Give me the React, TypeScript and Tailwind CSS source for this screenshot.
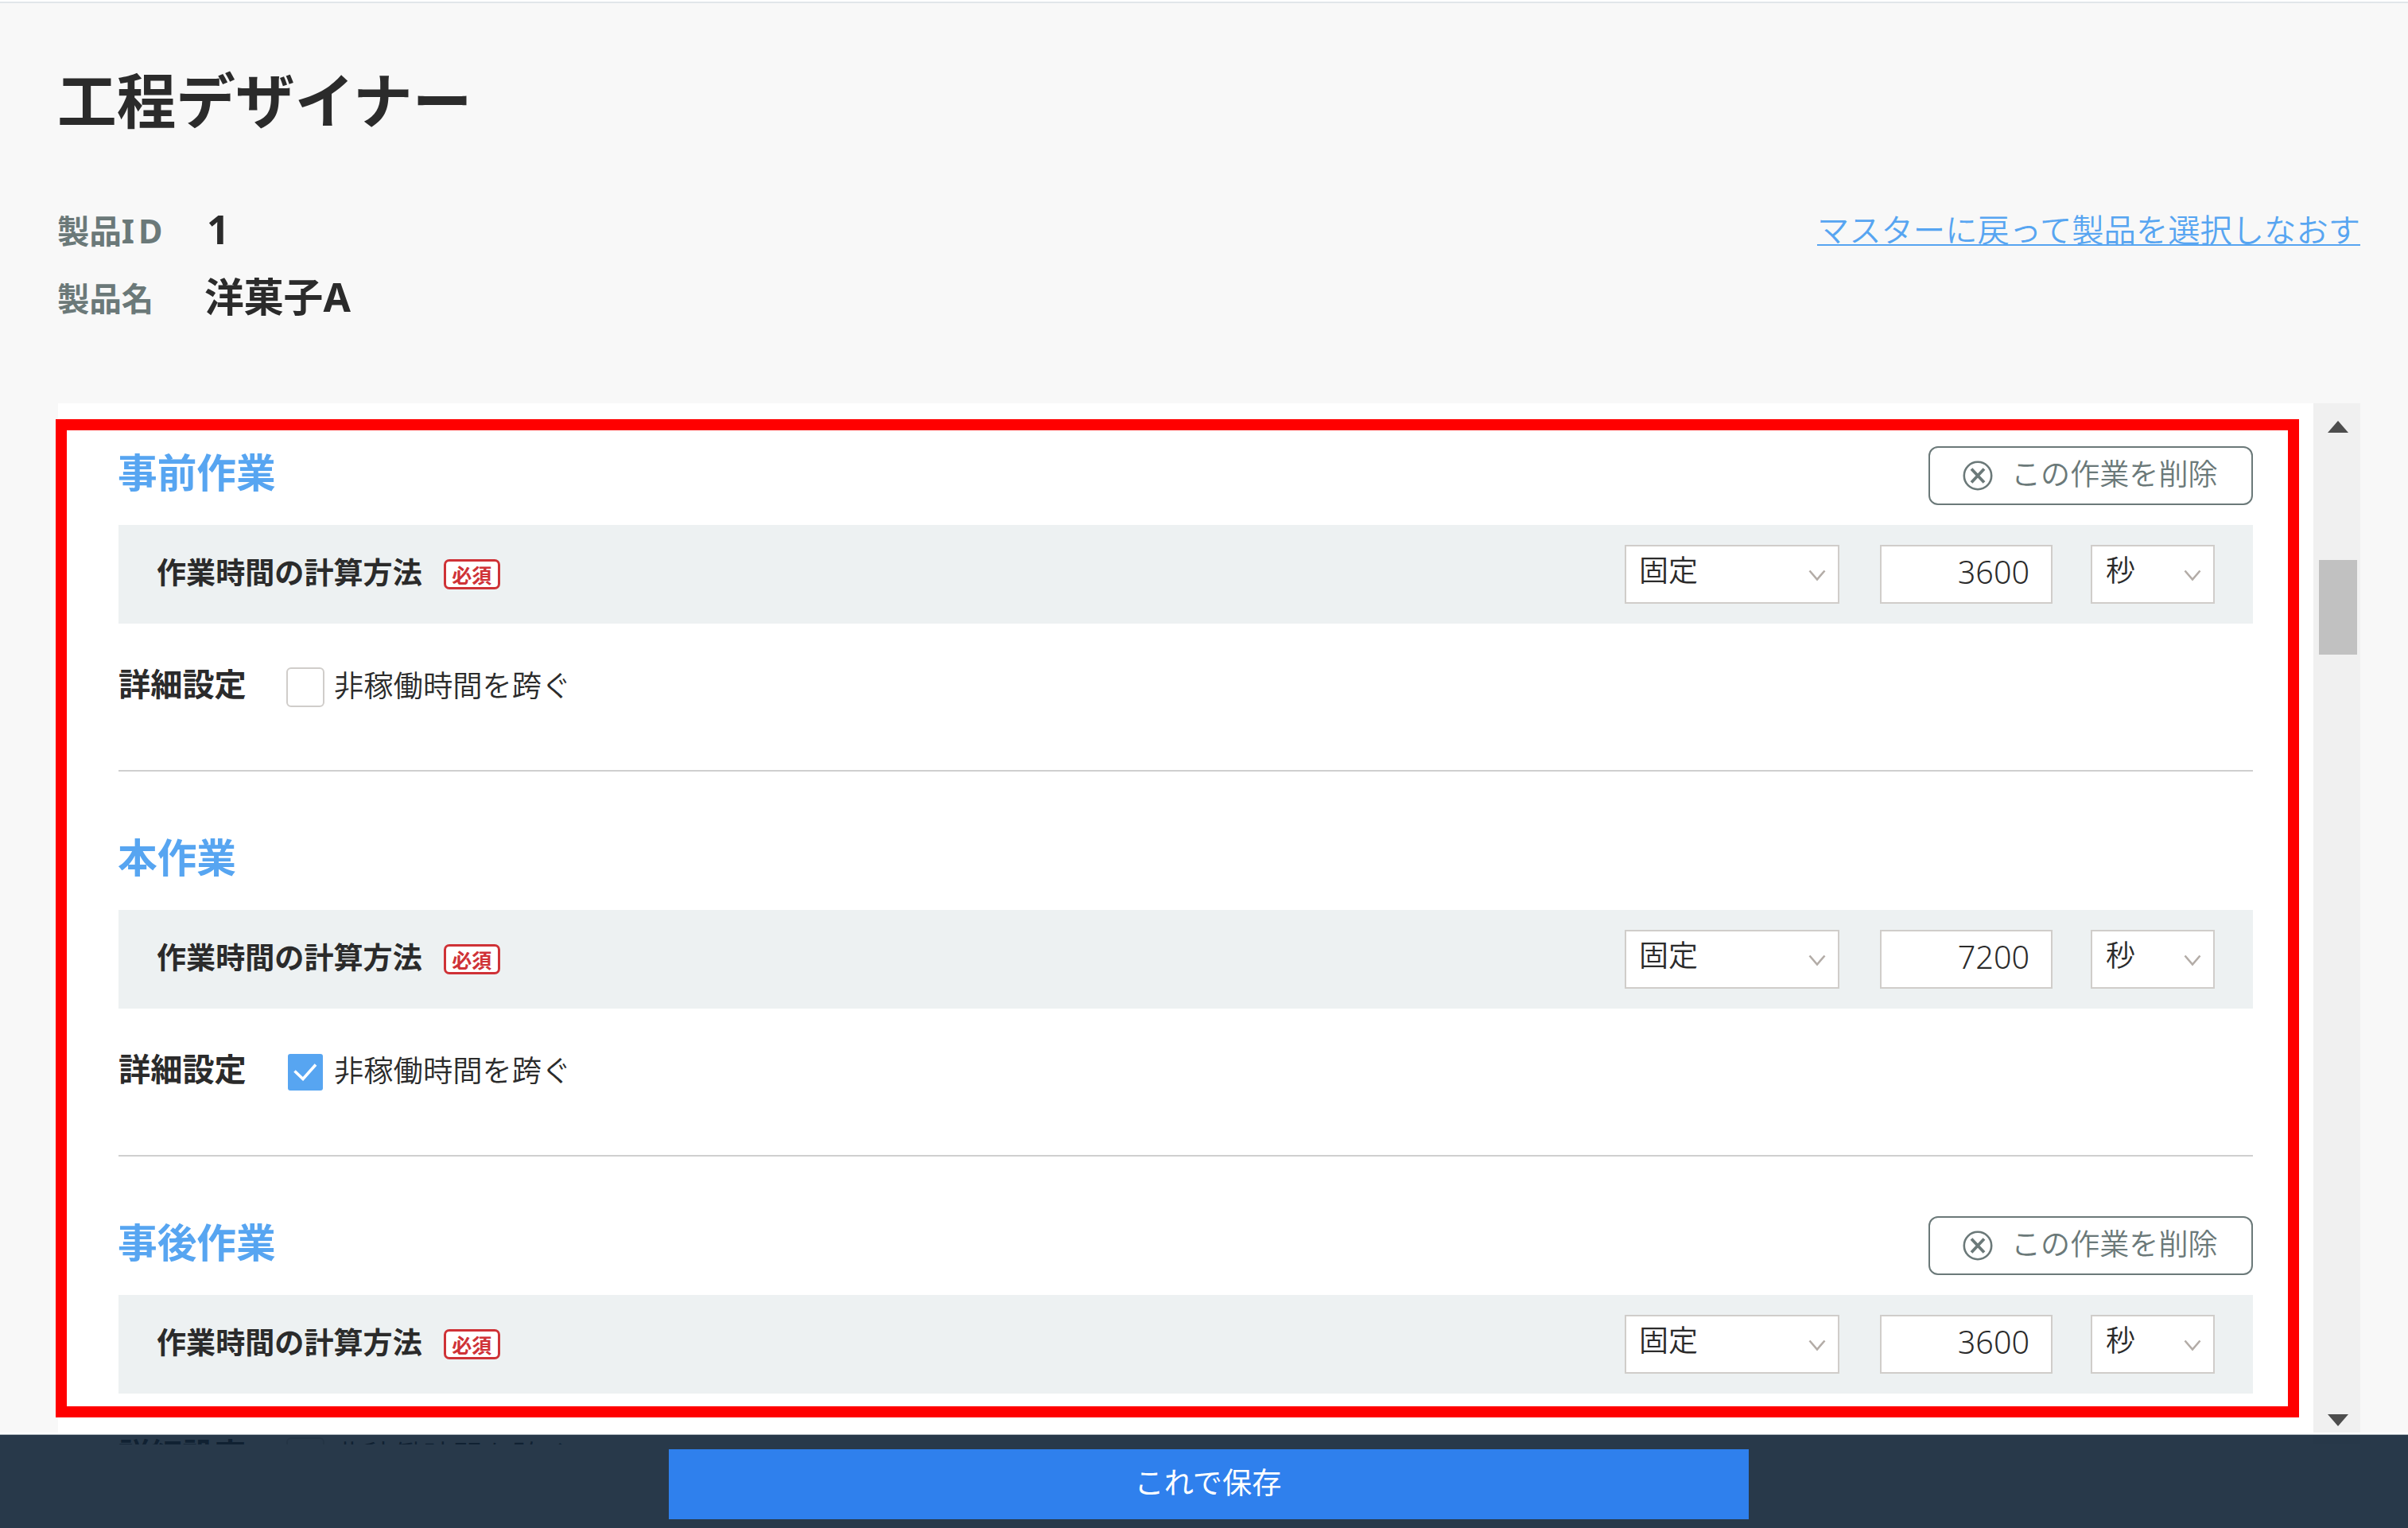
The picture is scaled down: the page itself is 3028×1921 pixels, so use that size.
import clsx from 'clsx';

type Work = {
  title: string;
  seconds: number;
  removable: boolean;
  crossIdle: boolean;
};

const works: Work[] = [
  { title: '事前作業', seconds: 3600, removable: true, crossIdle: false },
  { title: '本作業', seconds: 7200, removable: false, crossIdle: true },
  { title: '事後作業', seconds: 3600, removable: true, crossIdle: false },
];

function DeleteButton() {
  return (
    <button className="flex h-[74px] w-[408px] items-center rounded-[12px] border-2 border-[#6b7979] bg-white pl-[41px] text-[#6b7979]">
      <svg className="size-[38px]" viewBox="0 0 38 38" fill="none" stroke="currentColor">
        <circle cx="19" cy="19" r="17.2" strokeWidth="2.6" />
        <path d="M11 10.5l16 17M27 10.5l-16 17" strokeWidth="3.8" />
      </svg>
      <span className="ml-[23px] pb-[4px] text-[37.1px] leading-[60px] font-[350]">この作業を削除</span>
    </button>
  );
}

function SelectBox({ value, className }: { value: string; className: string }) {
  return (
    <div className={clsx('flex h-[74px] items-center justify-between border-2 border-[#d0cdca] bg-white pr-[15px]', className)}>
      <span className="pb-[10px] text-[37px] leading-[56px] font-[350]">{value}</span>
      <svg className="mt-[3px] h-[15px] w-[22px]" viewBox="0 0 22 15" fill="none" stroke="#b3aca7" strokeWidth="2.6">
        <path d="M1.5 1.5L11 12.5L20.5 1.5" />
      </svg>
    </div>
  );
}

function Checkbox({ checked }: { checked: boolean }) {
  if (!checked) {
    return <span className="h-[50px] w-[48px] rounded-[6px] border-2 border-[#d0cdca] bg-white" />;
  }
  return (
    <span className="mx-[2px] flex h-[46px] w-[44px] items-center justify-center rounded-[3px] bg-[#57a5f1]">
      <svg className="h-[22px] w-[30px]" viewBox="0 0 30 22" fill="none" stroke="#fff" strokeWidth="3.6">
        <path d="M1.5 9.5L12 19.5L28 1.5" />
      </svg>
    </span>
  );
}

function WorkSection({ work }: { work: Work }) {
  return (
    <section className="h-[484px]">
      <div className="flex h-[99px] items-start justify-between">
        <h2 className="-ml-px text-[49.7px] leading-[66px] font-bold text-[#57a5f1]">{work.title}</h2>
        {work.removable && <DeleteButton />}
      </div>

      <div className="flex h-[124px] items-center bg-[#edf1f2] pr-[48px] pl-[48px]">
        <span className="pb-[5px] text-[37.1px] leading-[60px] font-bold">作業時間の計算方法</span>
        <span className="ml-[27px] flex h-[38px] w-[71px] items-center justify-center rounded-[7px] border-[3px] border-[#cf3237] bg-white pt-[2px] text-[25px] leading-[30px] font-bold text-[#cf3237]">
          必須
        </span>
        <SelectBox value="固定" className="ml-auto w-[270px] pl-[16px]" />
        <div className="mr-[48px] ml-[51px] flex h-[74px] w-[217px] items-center justify-end border-2 border-[#d0cdca] bg-white pr-[27px] pb-[5px] text-[39.5px] font-[350]">
          {work.seconds}
        </div>
        <SelectBox value="秒" className="w-[156px] pl-[17px]" />
      </div>

      <div className="flex h-[186px] items-start border-b-[2px] border-[#cfcfcf] pt-[50px]">
        <span className="w-[211px] text-[40.2px] leading-[52px] font-bold">詳細設定</span>
        <label className="flex h-[60px] items-center">
          <Checkbox checked={work.crossIdle} />
          <span className="ml-[12px] pb-[5px] text-[37.3px] leading-[54px] font-[350]">非稼働時間を跨ぐ</span>
        </label>
      </div>
    </section>
  );
}

function Scrollbar() {
  return (
    <div className="flex h-[1309px] w-[59px] flex-col items-center bg-[#f0f0f0] pt-[22px]">
      <svg className="ml-[2px] h-[15px] w-[26px]" viewBox="0 0 26 15" fill="#4d4d4d">
        <path d="M13 0L26 15H0z" />
      </svg>
      <div className="mt-[160px] ml-[3px] h-[119px] w-[48px] bg-[#c1c1c1]" />
      <svg className="mt-[955px] ml-[2px] h-[15px] w-[26px] shrink-0" viewBox="0 0 26 15" fill="#4d4d4d">
        <path d="M0 0H26L13 15z" />
      </svg>
    </div>
  );
}

export default function App() {
  return (
    <div className="relative h-[1921px] w-[3028px] overflow-hidden border-t-2 border-white bg-[#f8f8f8] font-['Noto_Sans','Noto_Sans_CJK_JP',sans-serif] text-[#2b2b2b]">
      <header className="h-[505px] border-t-[2px] border-[#e1e6ea] pr-[60px] pl-[72px]">
        <h1 className="pt-[72px] text-[74.7px] leading-[100px] font-bold">工程デザイナー</h1>
        <div className="flex items-start justify-between pt-[72px]">
          <dl className="grid grid-cols-[186px_auto] leading-[85px] font-bold">
            <dt className="text-[40.4px] text-[#6b7979]">
              製品<span className="text-[41.5px] tracking-[5px]">ID</span>
            </dt>
            <dd className="-mt-[2px] pl-[2px] text-[50px]">1</dd>
            <dt className="text-[40.4px] text-[#6b7979]">製品名</dt>
            <dd className="-mt-[2px] -ml-px text-[49.8px]">洋菓子A</dd>
          </dl>
          <a href="#" className="-mt-[2px] text-[40.3px] leading-[85px] font-[350] text-[#57a5f1] underline decoration-2 underline-offset-[3px] [text-decoration-skip-ink:none]">
            マスターに戻って製品を選択しなおす
          </a>
        </div>
      </header>

      <main className="flex pl-[73px]">
        <div className="h-[1309px] w-[2836px] overflow-hidden bg-white pt-[54px] pr-[76px] pl-[76px]">
          {works.map((work) => (
            <WorkSection key={work.title} work={work} />
          ))}
        </div>
        <Scrollbar />
      </main>

      {/* highlighted area */}
      <div className="pointer-events-none absolute top-[525px] left-[70px] h-[1255px] w-[2821px] border-[14px] border-[#ff0000]" />

      <footer className="absolute bottom-0 left-0 w-full border-t-2 border-white">
        <div className="flex h-[118px] justify-center border-t border-[#b4bdc3] bg-[#0d2134]/89 pt-[18px] pl-[12px]">
          <button className="h-[88px] w-[1358px] bg-[#2f80ed] pr-[2px] pb-[4px] text-[37.2px] text-white">これで保存</button>
        </div>
      </footer>
    </div>
  );
}
